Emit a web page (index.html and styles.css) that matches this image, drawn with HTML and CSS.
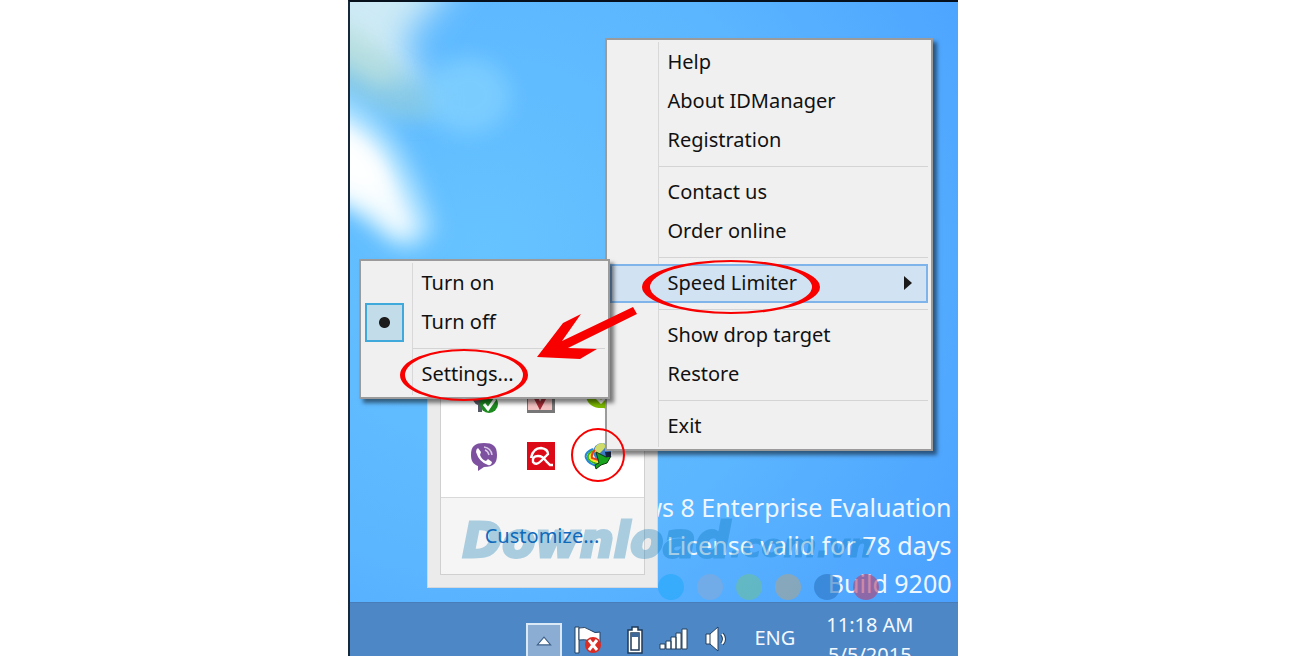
FILE: index.html
```html
<!DOCTYPE html>
<html lang="en">
<head>
    <meta charset="UTF-8">
    <meta name="viewport" content="width=device-width, initial-scale=1.0">
    <title>IDManager tray menu</title>
    <link rel="stylesheet" href="styles.css">
</head>
<body>
    <main class="desktop">
        <!-- Wallpaper -->
        <svg class="wallpaper" viewBox="0 0 300 260" width="300" height="260" aria-hidden="true">
            <defs>
                <filter id="wide" filterUnits="userSpaceOnUse" x="-80" y="-80" width="400" height="400"><feGaussianBlur stdDeviation="17"/></filter>
                <filter id="soft" filterUnits="userSpaceOnUse" x="-80" y="-80" width="400" height="400"><feGaussianBlur stdDeviation="10"/></filter>
            </defs>
            <path d="M-60 -60H135L84 4L56 34L60 62L84 96L50 100L20 84L-60 40Z" fill="#cdeaf6" filter="url(#wide)"/>
            <path d="M-40 20L36 60L94 98L80 118L44 116L-40 84Z" fill="#84c8e0" opacity=".7" filter="url(#soft)"/>
            <path d="M-40 0L20 34L50 74L30 84L-40 44Z" fill="#bfe2dd" opacity=".7" filter="url(#soft)"/>
            <ellipse cx="118" cy="94" rx="42" ry="38" fill="#83d2ff" opacity=".75" filter="url(#soft)"/>
            <path d="M-40 80Q14 90 50 142Q76 190 86 226Q66 258 40 242Q10 216 -40 180Z" fill="#9fdcff" filter="url(#soft)"/>
            <path d="M-50 100Q10 116 34 156Q58 200 66 228Q54 244 34 224Q8 200 -50 184Z" fill="#f4fcff" filter="url(#soft)"/>
            <path d="M-30 126Q10 136 26 160Q36 180 38 194Q10 190 -30 170Z" fill="#ffffff" filter="url(#soft)"/>
        </svg>

        <p class="edition">Windows 8 Enterprise Evaluation<br>License valid for 78 days<br>Build 9200</p>

        <!-- Hidden icons popup -->
        <section class="tray">
            <div class="tray-panel">
                <div class="tray-icons">
                    <svg viewBox="0 0 30 30" width="30" height="30">
                        <path d="M3 8h15v12H13v7h-4v-7Q3 18 3 8Z" fill="#555a66"/>
                        <circle cx="20" cy="19" r="9" fill="#1d8a20"/>
                        <path d="M15 19l4 5 7-10" fill="none" stroke="#fff" stroke-width="3"/>
                    </svg>
                    <svg viewBox="0 0 30 30" width="30" height="30">
                        <path d="M1 1h28v27H1z" fill="#777"/>
                        <path d="M2 1h24v24H2z" fill="#f3c3c3"/>
                        <path d="M9 11l5 10 7-13" fill="none" stroke="#a32b35" stroke-width="4"/>
                    </svg>
                    <svg viewBox="0 0 30 30" width="30" height="30">
                        <path d="M3 12h26v16l-8-5Q6 24 3 12Z" fill="#7cb900"/>
                        <path d="M12 11l6 6 9-9" fill="none" stroke="#fff" stroke-width="3"/>
                    </svg>
                    <svg viewBox="0 0 30 30" width="30" height="30">
                        <path d="M15 2C24 2 28 5 28 14C28 22 25 26 15 26L9 30L9 25C4 23 2 20 2 14C2 5 6 2 15 2Z" fill="#7d51a0"/>
                        <path d="M9 7l3 4-1 3q2 5 6 6l2-2 4 3q-1 4-4 3Q10 21 7 11q0-3 2-4Z" fill="#fff"/>
                        <path d="M15 6q7 1 8 8M16 9q3 1 4 5" fill="none" stroke="#d9c8e6" stroke-width="1.5"/>
                    </svg>
                    <svg viewBox="0 0 30 30" width="30" height="30">
                        <path d="M1 1h28v28H1z" fill="#dc0a17"/>
                        <path d="M5 17Q7 7 15 7Q22 8 22 13L15 20Q10 25 7 21Q6 15 12 15Q17 15 20 20L24 24H27" fill="none" stroke="#fff" stroke-width="2.4"/>
                    </svg>
                    <svg viewBox="0 0 30 30" width="30" height="30">
                        <circle cx="19" cy="11" r="9" fill="#3d7cc6"/>
                        <path d="M11 11Q12 2 20 2Q24 4 21 8L16 13Z" fill="#cfdc6a"/>
                        <path d="M10 8Q1 12 3 17Q6 24 16 25" fill="none" stroke="#2387d6" stroke-width="2"/>
                        <path d="M10 10Q4 13 5 17Q8 22 16 23" fill="none" stroke="#3fb51c" stroke-width="2"/>
                        <path d="M11 11Q6 14 7 17Q9 20 16 21" fill="none" stroke="#ffe01c" stroke-width="2"/>
                        <path d="M12 9Q8 13 9 17L15 19" fill="none" stroke="#e4401b" stroke-width="2"/>
                        <path d="M13 11l10 5 5-1-4 7-6 2-5 4-1-4 4-2Z" fill="#17a31b" stroke="#12380f"/>
                        <path d="M22 11h6v5h-5z" fill="#172342"/>
                    </svg>
                </div>
                <div class="tray-footer"><a href="#">Customize...</a></div>
            </div>
        </section>

        <!-- Main context menu -->
        <div class="menu main-menu">
            <button class="item">Help</button>
            <button class="item">About IDManager</button>
            <button class="item">Registration</button>
            <hr>
            <button class="item">Contact us</button>
            <button class="item">Order online</button>
            <hr>
            <button class="item active">Speed Limiter
                <svg class="more" viewBox="0 0 8 14" width="8" height="14"><path d="M0 0l8 7-8 7z" fill="#1a1a1a"/></svg>
            </button>
            <hr>
            <button class="item">Show drop target</button>
            <button class="item">Restore</button>
            <hr>
            <button class="item">Exit</button>
        </div>

        <!-- Speed Limiter submenu -->
        <div class="menu sub-menu">
            <label class="item"><input type="radio" name="limiter">Turn on</label>
            <label class="item"><input type="radio" name="limiter" checked>Turn off</label>
            <hr>
            <button class="item">Settings...</button>
        </div>

        <footer class="taskbar">
            <button class="show-hidden" aria-label="Show hidden icons">
                <svg viewBox="0 0 14 9" width="16" height="10"><path d="M7 1l6 7H1z" fill="#fff" stroke="#3d5f88"/></svg>
            </button>
            <svg class="flag" viewBox="0 0 30 30" width="30" height="30">
                <path d="M2 2h4v26H2z" fill="#fff" stroke="#24405f"/>
                <path d="M6 3q6-2 11 2t10 2v11q-5 0-10-2t-11-1z" fill="#fff" stroke="#24405f"/>
                <circle cx="20" cy="20" r="8" fill="#dc2b22"/>
                <path d="M16 15l8 10M24 15l-8 10" stroke="#fff" stroke-width="3"/>
            </svg>
            <svg class="battery" viewBox="0 0 18 30" width="18" height="30">
                <path d="M6 2h6v3h4v23H2V5h4z" fill="#fff" stroke="#1f3a58" stroke-width="1.5"/>
                <path d="M5 8h8v17H5z" fill="#fff" stroke="#1f3a58" stroke-width="1.5"/>
                <path d="M5 8h8v4H5z" fill="#3c6797"/>
            </svg>
            <svg class="signal" viewBox="0 0 30 24" width="30" height="24">
                <path d="M1 17h5v5H1zM7 14h5v8H7zM12 10h5v12h-5zM17 6h5v16h-5zM23 2h5v20h-5z" fill="#fff" stroke="#24405f"/>
            </svg>
            <svg class="volume" viewBox="0 0 24 28" width="24" height="28">
                <path d="M1 9h4l8-7v24l-8-7H1z" fill="#fff" stroke="#24405f"/>
                <path d="M5 9v10" stroke="#24405f"/>
                <path d="M17 9q4 5 0 10" fill="none" stroke="#24405f" stroke-width="4"/>
                <path d="M17 9q4 5 0 10" fill="none" stroke="#fff" stroke-width="2"/>
            </svg>
            <span class="lang">ENG</span>
            <time class="clock">11:18 AM<br>5/5/2015</time>
        </footer>

        <!-- Site watermark -->
        <div class="watermark">
            <div class="brand">Download<small>.com.vn</small></div>
            <div class="dots">
                <i class="dot sky"></i>
                <i class="dot grey"></i>
                <i class="dot green"></i>
                <i class="dot sand"></i>
                <i class="dot navy"></i>
                <i class="dot red"></i>
            </div>
        </div>

        <!-- Red pen marks -->
        <svg class="marks" viewBox="0 0 609 656" width="609" height="656" aria-hidden="true">
            <path fill-rule="evenodd" d="M293 287a89 27 0 1 0 178 0a89 27 0 1 0 -178 0ZM301 287a81 25 0 1 0 162 0a81 25 0 1 0 -162 0Z"/>
            <path fill-rule="evenodd" d="M51 375a64 26 0 1 0 128 0a64 26 0 1 0 -128 0ZM56 375a59 24 0 1 0 118 0a59 24 0 1 0 -118 0Z"/>
            <path d="M188 357L214 323L232 314L213 341L284 307L288 314L219 348L248 349L231 359Z"/>
            <circle cx="249" cy="455" r="26"/>
        </svg>
    </main>
</body>
</html>
```
FILE: styles.css
```css
* {
    box-sizing: border-box;
}
body {
    margin: 0;
    background: #ffffff;
    font-family: 'Noto Sans', 'Open Sans', sans-serif;
    font-size: 20px;
    color: #111111;
}
.desktop {
    position: relative;
    display: flex;
    flex-direction: column;
    width: 100%;
    max-width: 610px;
    height: 100vh;
    margin: 0 auto;
    overflow: hidden;
    border-top: 2px solid #06101c;
    border-left: 2px solid #16283a;
    background: radial-gradient(circle at 22% 38%, #67c3ff 0%, #5cb6ff 50%, #4499ff 110%);
}
.wallpaper {
    position: absolute;
    top: 0;
    left: 0;
}
/* Evaluation notice */
.edition {
    margin: auto 6px 0 0;
    font-size: 25px;
    line-height: 38px;
    text-align: right;
    white-space: nowrap;
    color: #eef7ff;
}
/* Hidden icons popup */
.tray {
    position: absolute;
    top: 340px;
    left: 77px;
    width: 231px;
    padding: 12px;
    background: #ebebeb;
    border: 1px solid #d4d8dc;
}
.tray-panel {
    border: 1px solid #d0d0d0;
    background: #ffffff;
}
.tray-icons {
    display: grid;
    grid-template-columns: repeat(3, 30px);
    gap: 26px 27px;
    padding: 29px 27px 26px 28px;
}
.tray-footer {
    height: 77px;
    border-top: 1px solid #d9d9d9;
    background: #f5f5f5;
    line-height: 76px;
    text-align: center;
}
.tray-footer a {
    color: #1468c0;
    text-decoration: none;
}
/* Menus */
.menu {
    position: absolute;
    padding: 3px;
    border: 2px solid #9b9b9b;
    background: #f0f0f0;
    box-shadow: 4px 4px 4px rgba(0, 0, 0, 0.5);
}
.menu::before {
    content: '';
    position: absolute;
    top: 2px;
    bottom: 2px;
    left: 51px;
    width: 1px;
    background: #d8d8d8;
}
.main-menu {
    top: 36px;
    left: 255px;
    width: 328px;
}
.sub-menu {
    top: 257px;
    left: 9px;
    width: 251px;
}
.item {
    position: relative;
    display: flex;
    align-items: center;
    width: 100%;
    height: 39px;
    padding: 0 14px 2px 57px;
    border: 1px solid transparent;
    background: none;
    font: inherit;
    color: inherit;
    text-align: left;
    white-space: nowrap;
}
.item.active {
    border: 2px solid #7eb4ea;
    padding-left: 56px;
    background: #d1e2f2;
}
.more {
    margin-left: auto;
}
.menu hr {
    height: 1px;
    margin: 6px 0 6px 49px;
    border: none;
    background: #d4d4d4;
}
.item input {
    position: absolute;
    top: -1px;
    left: 0;
    width: 39px;
    height: 39px;
    margin: 0;
    appearance: none;
}
.item input:checked {
    border: 2px solid #3fa9dc;
    background: radial-gradient(circle, #1c1c1c 5px, #c2dcea 6px);
}
/* Taskbar */
.taskbar {
    display: flex;
    flex-shrink: 0;
    height: 54px;
    padding: 20px 44px 0 176px;
    overflow: hidden;
    border-top: 1px solid #477db8;
    background: #4d87c6;
    color: #f4f9ff;
}
.show-hidden {
    width: 36px;
    height: 36px;
    padding: 0;
    border: 2px solid #dbe8f5;
    background: #8badd3;
}
.flag {
    margin: 2px 0 0 11px;
}
.battery {
    margin: 2px 0 0 23px;
}
.signal {
    margin: 4px 0 0 15px;
}
.volume {
    margin: 2px 0 0 16px;
}
.lang {
    margin: 1px 0 0 26px;
}
.clock {
    margin: -13px 0 0 auto;
    line-height: 30px;
    text-align: center;
    white-space: nowrap;
}
/* Watermark */
.watermark {
    position: absolute;
    top: 510px;
    left: 113px;
    pointer-events: none;
}
.brand {
    font: italic bold 48px/56px 'DejaVu Sans', sans-serif;
    color: #0070b0;
    -webkit-text-stroke: 3px #0070b0;
    white-space: nowrap;
    opacity: 0.3;
}
.brand small {
    font-size: 32px;
    -webkit-text-stroke-width: 1px;
}
.dots {
    display: flex;
    gap: 13px;
    margin: 0 0 0 195px;
}
.dot {
    width: 26px;
    height: 26px;
    border-radius: 50%;
    opacity: 0.6;
}
.sky { background: #22a8fa; }
.grey { background: #83a9d8; }
.green { background: #6abf9c; }
.sand { background: #a8a590; }
.navy { background: #2b74c2; }
.red { background: #b8406e; }
/* Pen marks */
.marks {
    position: absolute;
    top: -2px;
    left: -1px;
    fill: #f80000;
    pointer-events: none;
}
.marks circle {
    fill: none;
    stroke: #f80000;
    stroke-width: 2;
}
```
